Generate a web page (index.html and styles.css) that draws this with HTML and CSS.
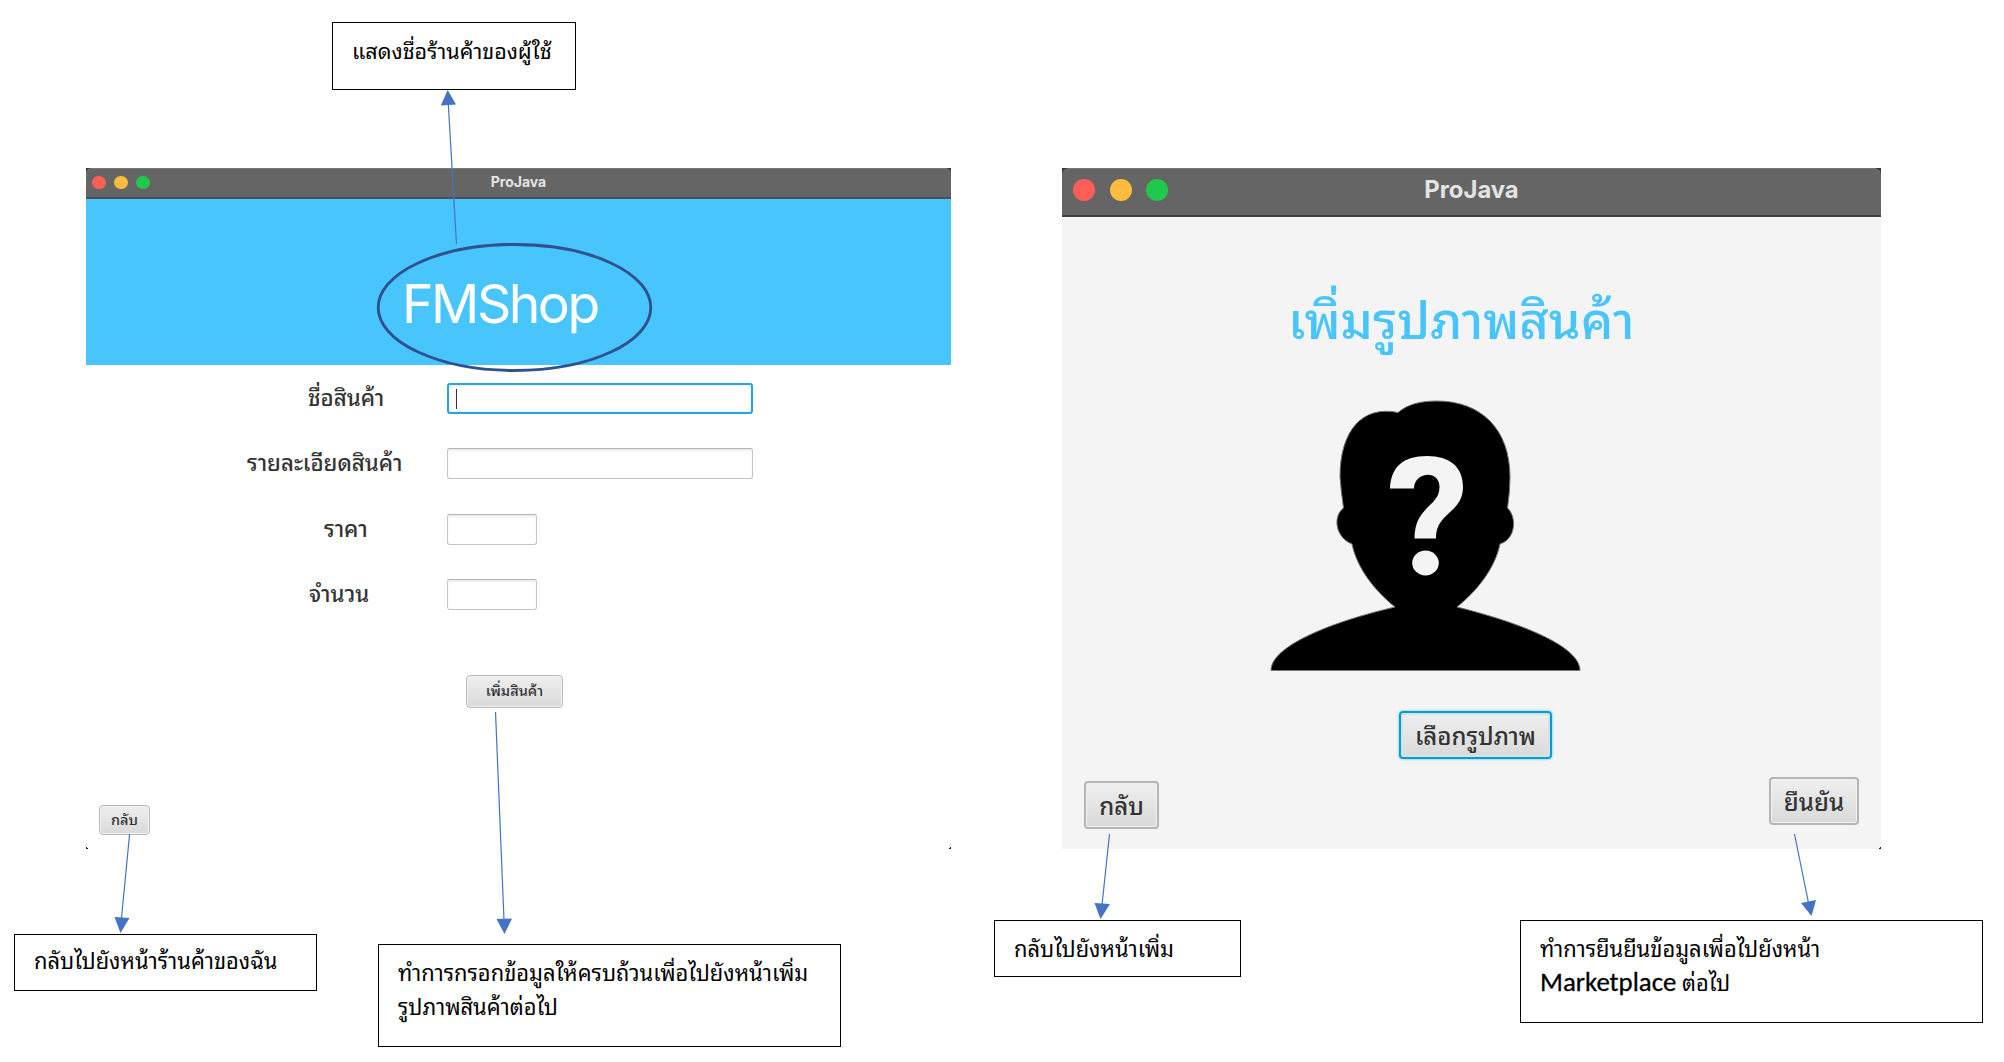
FILE: index.html
```html
<!DOCTYPE html>
<html lang="th">
<head>
<meta charset="utf-8">
<title>ProJava</title>
<link rel="stylesheet" href="styles.css">
</head>
<body>
<main class="canvas">
  <section class="window shop">
    <header class="titlebar">
      <span class="lights"><i class="light red"></i><i class="light amber"></i><i class="light green"></i></span>
      <span class="app-name">ProJava</span>
    </header>
    <div class="banner"><span class="shop-name">FMShop</span></div>
    <form class="form">
      <div class="row"><label class="name"><span>ชื่อสินค้า</span></label><div class="field focused"><span class="caret"></span></div></div>
      <div class="row"><label class="detail"><span>รายละเอียดสินค้า</span></label><div class="field"></div></div>
      <div class="row"><label class="price"><span>ราคา</span></label><div class="field short"></div></div>
      <div class="row"><label class="amount"><span>จำนวน</span></label><div class="field short"></div></div>
    </form>
    <button class="btn add" type="button"><span>เพิ่มสินค้า</span></button>
    <button class="btn back" type="button"><span>กลับ</span></button>
  </section>

  <section class="window photo">
    <header class="titlebar">
      <span class="lights"><i class="light red"></i><i class="light amber"></i><i class="light green"></i></span>
      <span class="app-name">ProJava</span>
    </header>
    <h1 class="heading"><span>เพิ่มรูปภาพสินค้า</span></h1>
    <svg class="avatar" viewBox="0 0 312 272" width="312" height="272">
      <path stroke="#777" stroke-width="1" d="M128 12.500C138 4 151 1 167 1C211 1 240 29 240 77Q240 91 237.500 108C247 117 246 139 230 144C225 168 208 190 187 207C251 223 310 246 310 270.500H1C1 246 61 222 125 207C104 190 87 168 82 144C66 138 62 117 73.500 108Q71 91 70 77C70 31 92 5 128 12.500Z"/>
      <path fill="#f4f4f4" d="M120 88.500C121 67 133 56 157 56C180 56 193 67 193 87C193 113 166 112 166 138.500H144.500C144.500 106 169.500 107 169.500 87C169.500 69 144 72 144 88.500Z"/>
      <ellipse fill="#f4f4f4" cx="155.500" cy="163" rx="13.300" ry="12.500"/>
    </svg>
    <button class="btn choose" type="button"><span>เลือกรูปภาพ</span></button>
    <div class="actions">
      <button class="btn return" type="button"><span>กลับ</span></button>
      <button class="btn confirm" type="button"><span>ยืนยัน</span></button>
    </div>
  </section>

  <p class="note note-shop">แสดงชื่อร้านค้าของผู้ใช้</p>
  <p class="note note-mine">กลับไปยังหน้าร้านค้าของฉัน</p>
  <p class="note note-fill">ทำการกรอกข้อมูลให้ครบถ้วนเพื่อไปยังหน้าเพิ่ม<br>รูปภาพสินค้าต่อไป</p>
  <p class="note note-add">กลับไปยังหน้าเพิ่ม</p>
  <p class="note note-market">ทำการยืนยีนข้อมูลเพื่อไปยังหน้า<br><span class="latin">Marketplace</span> ต่อไป</p>

  <svg class="overlay" viewBox="0 0 2004 1062" width="2004" height="1062">
    <ellipse cx="514.500" cy="307.500" rx="136.300" ry="63" fill="none" stroke="#2f528f" stroke-width="2.900"/>
    <g stroke="#4472c4" stroke-width="1.200">
      <path d="M456.500 244L448.300 104M129.600 834L121.500 918M495.500 712L504 920M1109.500 834L1102 905M1794.500 834L1808.500 903"/>
    </g>
    <g fill="#4472c4">
      <path d="M447.700 90L456 104.500L440.800 105.500ZM120.500 933L114.500 917L129.500 918ZM504.500 934L496.500 919L512 918.500ZM1100.500 919L1094.500 903L1110 904ZM1811.500 916L1801 903L1816 900Z"/>
    </g>
  </svg>
</main>
</body>
</html>
```
FILE: styles.css
```css
* { box-sizing: border-box; }
:root { --thai: "Noto Sans Thai Looped", "IBM Plex Sans Thai Looped", Sarabun, Loma, Garuda, Waree, "Noto Sans Thai", "Noto Sans", sans-serif; }
body { margin: 0; background: #fff; font-family: var(--thai); color: #333; }
.canvas { position: relative; width: 2004px; height: 1062px; overflow: hidden; }
.overlay { position: absolute; left: 0; top: 0; pointer-events: none; }

/* application windows */
.window { position: absolute; top: 168px; height: 681px; display: flex; flex-direction: column; }
.shop { left: 86px; width: 865px; background: linear-gradient(45deg, #222 1.500px, transparent 2px) 0 100% / 3px 3px no-repeat, linear-gradient(-45deg, #222 1.500px, transparent 2px) 100% 100% / 3px 3px no-repeat, linear-gradient(#3a3a3a 6px, #fff 6px); }
.photo { left: 1062px; width: 819px; background: linear-gradient(-45deg, #222 1.500px, transparent 2px) 100% 100% / 3px 3px no-repeat, linear-gradient(#3a3a3a 9px, #f4f4f4 9px); }
.titlebar { flex: none; display: grid; grid-template-columns: 1fr auto 1fr; align-items: center; background: #656565; color: #e4e4e4; font-family: Inter, sans-serif; font-weight: 700; border-radius: 6px 6px 0 0; box-shadow: inset 0 1px 0 #777; }
.shop .titlebar { height: 31px; border-bottom: 2px solid #465158; padding: 0 6px; font-size: 14px; }
.photo .titlebar { height: 49px; border-bottom: 2px solid #403c3c; padding: 0 11px 3px; font-size: 23.800px; border-radius: 8px 8px 0 0; }
.lights { display: flex; gap: 8.500px; }
.photo .lights { gap: 14.500px; }
.light { width: 13.500px; height: 13.500px; border-radius: 50%; }
.photo .light { width: 22px; height: 22px; }
.red { background: #ff5f57; }
.amber { background: #febc3f; }
.green { background: #20c94b; }
.shop .app-name { line-height: 18px; margin-top: -2px; }
.photo .app-name { line-height: 30px; margin-top: -1px; }

.banner { flex: none; height: 166px; background: #48c5fd; display: flex; padding: 72px 0 0 316px; color: #fff; font-family: Inter, sans-serif; font-size: 53.500px; letter-spacing: -2.500px; line-height: 65px; }

.form { display: flex; flex-direction: column; gap: 34.300px; padding-top: 18px; }
.row { display: flex; height: 31px; }
.row label { width: 361px; flex: none; font-size: 22.200px; line-height: 27px; white-space: nowrap; font-weight: 500; }
.name { padding-left: 222px; }
.detail { padding-left: 161px; }
.price { padding-left: 238px; }
.amount { padding-left: 223px; }
.field { width: 306px; border: 1px solid #c4c4c4; border-top-color: #b4b4b4; border-radius: 3px; background: #fff; box-shadow: inset 0 2px 2px #eee; }
.field.short { width: 90px; }
.field.focused { border: 2px solid #2ba5d6; box-shadow: inset 0 0 2px #a8dcf0; padding: 4px 0 0 7px; }
.caret { display: block; width: 1px; height: 20px; background: #333; }

.btn { font: 500 16px/1 var(--thai); color: #333; padding: 0 0 3px; display: flex; justify-content: center; align-items: center; white-space: nowrap; flex: none; border: 1px solid #b9b9b9; border-radius: 4px; background: linear-gradient(#efefef, #d9d9d9); box-shadow: inset 0 0 0 1px #f1f1f1; }
.add { width: 97px; height: 33px; margin: 65px 0 0 380px; font-size: 14.500px; padding-bottom: 2px; }
.back { width: 51px; height: 30px; margin: 97px 0 0 13px; font-size: 14.500px; padding-bottom: 1px; }

.heading { margin: 60px 0 0 226px; height: 80px; font-size: 50.500px; line-height: 80px; font-weight: 500; color: #48c5fd; white-space: nowrap; }
.avatar { margin: 43px 0 0 207.500px; flex: none; }
.choose { width: 153px; height: 48px; margin: 39px 0 0 337px; font-size: 24px; border: 2px solid #079bd2; box-shadow: 0 0 2px 1px #a8dcec, inset 0 0 0 2px #d0e4ea; }
.actions { display: flex; justify-content: space-between; padding: 18px 22px 0; }
.return, .confirm { height: 48px; font-size: 24px; border: 2px solid #b5b5b5; }
.return { width: 75px; margin-top: 4px; }
.confirm { width: 90px; }

/* annotations */
.note { position: absolute; margin: 0; border: 1px solid #000; background: #fff; color: #000; font-size: 21.900px; line-height: 34px; padding: 10px 0 0 19px; white-space: nowrap; }
.latin { font-family: Carlito, Lato, sans-serif; font-size: 26.800px; font-weight: 400; line-height: 1; -webkit-text-stroke: 0.300px #000; }
.note-shop { left: 332px; top: 22px; width: 244px; height: 68px; font-size: 21.500px; }
.note-mine { left: 14px; top: 934px; width: 303px; height: 57px; padding-top: 8px; }
.note-fill { left: 378px; top: 944px; width: 463px; height: 103px; }
.note-add { left: 994px; top: 920px; width: 247px; height: 57px; }
.note-market { left: 1520px; top: 920px; width: 463px; height: 103px; }
```
